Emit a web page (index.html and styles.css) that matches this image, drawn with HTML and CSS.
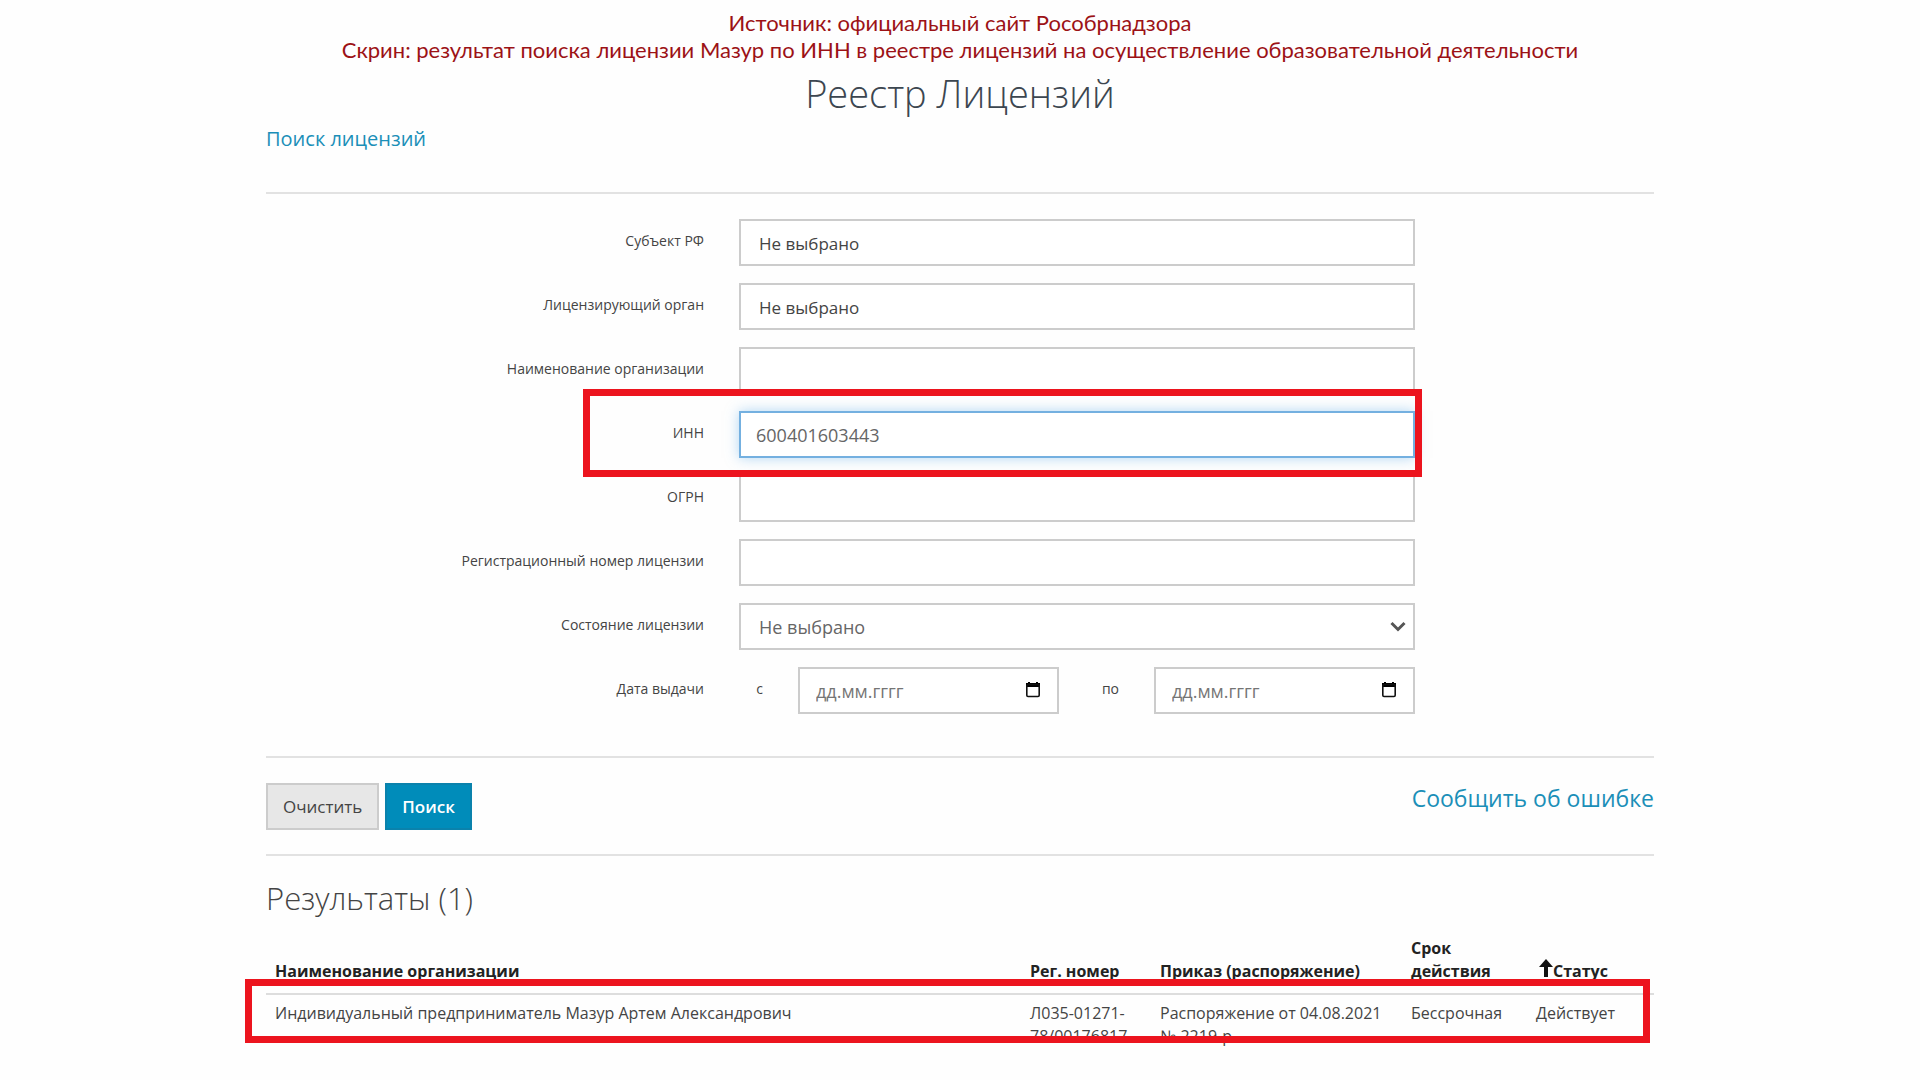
FILE: index.html
```html
<!DOCTYPE html>
<html lang="ru">
<head>
<meta charset="utf-8">
<meta name="viewport" content="width=device-width, initial-scale=1">
<title>Реестр Лицензий</title>
<link rel="stylesheet" href="styles.css">
</head>
<body>
<header class="caption">
  <p>Источник: официальный сайт Рособрнадзора</p>
  <p>Скрин: результат поиска лицензии Мазур по ИНН в реестре лицензий на осуществление образовательной деятельности</p>
</header>
<main class="page">
  <h1 class="title">Реестр Лицензий</h1>
  <nav class="nav"><a href="#search">Поиск лицензий</a></nav>
  <form id="search">
    <div class="fields">
      <div class="row">
        <label for="region">Субъект РФ</label>
        <input class="control picker" id="region" type="text" value="Не выбрано" readonly>
      </div>
      <div class="row">
        <label for="authority">Лицензирующий орган</label>
        <input class="control picker" id="authority" type="text" value="Не выбрано" readonly>
      </div>
      <div class="row">
        <label for="org">Наименование организации</label>
        <input class="control" id="org" type="text">
      </div>
      <div class="row marked">
        <label for="inn">ИНН</label>
        <input class="control active" id="inn" type="text" value="600401603443">
      </div>
      <div class="row">
        <label for="ogrn">ОГРН</label>
        <input class="control" id="ogrn" type="text">
      </div>
      <div class="row">
        <label for="regnum">Регистрационный номер лицензии</label>
        <input class="control" id="regnum" type="text">
      </div>
      <div class="row">
        <label for="state">Состояние лицензии</label>
        <div class="select">
          <select class="control" id="state"><option>Не выбрано</option></select>
          <svg class="chevron" viewBox="0 0 16 11" aria-hidden="true"><path d="M1.5 2 8 8.5 14.5 2" fill="none" stroke="#555" stroke-width="3"/></svg>
        </div>
      </div>
      <div class="row">
        <span class="label">Дата выдачи</span>
        <div class="dates">
          <label for="from">с</label>
          <div class="date">
            <input class="control" id="from" type="text" placeholder="дд.мм.гггг">
            <button class="calendar" type="button" aria-label="Выбрать дату"><svg viewBox="0 0 16 16"><path d="M3 0h2v1h6V0h2v1h2v4H1V1h2z"/><rect x="1.8" y="2.5" width="12.4" height="12" rx="1.2" fill="none" stroke="#111" stroke-width="1.6"/></svg></button>
          </div>
          <label for="to">по</label>
          <div class="date">
            <input class="control" id="to" type="text" placeholder="дд.мм.гггг">
            <button class="calendar" type="button" aria-label="Выбрать дату"><svg viewBox="0 0 16 16"><path d="M3 0h2v1h6V0h2v1h2v4H1V1h2z"/><rect x="1.8" y="2.5" width="12.4" height="12" rx="1.2" fill="none" stroke="#111" stroke-width="1.6"/></svg></button>
          </div>
        </div>
      </div>
    </div>
    <div class="actions">
      <button class="btn" type="reset">Очистить</button>
      <button class="btn primary" type="submit">Поиск</button>
      <a class="report" href="#report">Сообщить об ошибке</a>
    </div>
  </form>
  <section>
    <h2 class="results-title">Результаты (1)</h2>
    <table class="results">
      <colgroup><col class="c-name"><col class="c-reg"><col class="c-order"><col class="c-term"><col class="c-status"></colgroup>
      <thead>
        <tr>
          <th>Наименование организации</th>
          <th>Рег. номер</th>
          <th>Приказ (распоряжение)</th>
          <th>Срок действия</th>
          <th class="sorted"><svg class="arrow" viewBox="0 0 14 18" aria-hidden="true"><path d="M7 0 14 8H9v10H5V8H0z"/></svg>Статус</th>
        </tr>
      </thead>
      <tbody>
        <tr class="marked">
          <td>Индивидуальный предприниматель Мазур Артем Александрович</td>
          <td>Л035-01271-78/00176817</td>
          <td>Распоряжение от 04.08.2021 № 2219-р</td>
          <td>Бессрочная</td>
          <td>Действует</td>
        </tr>
      </tbody>
    </table>
  </section>
</main>
</body>
</html>
```
FILE: styles.css
```css
*, *::after { box-sizing: border-box; }
body {
  margin: 0;
  background: #fefefe;
  color: #444;
  font-family: "Open Sans", "Noto Sans", sans-serif;
  font-size: 16px;
  line-height: 23px;
}
a { color: #1b8fb8; text-decoration: none; }

.caption {
  padding: 9px 0 1px;
  color: #9c1216;
  font-family: Lato, "Open Sans", sans-serif;
  font-size: 22px;
  line-height: 27px;
  text-align: center;
}
.caption p { margin: 0; }

.page { max-width: 1388px; margin: 0 auto; }
.title {
  margin: 0;
  color: #3c4650;
  font-size: 38px;
  font-weight: 300;
  line-height: 58px;
  text-align: center;
}
.nav {
  height: 72px;
  padding-top: 3px;
  border-bottom: 2px solid #e2e2e2;
  font-size: 20px;
  line-height: 28px;
}

.fields {
  display: flex;
  flex-direction: column;
  gap: 17px;
  padding: 25px 239px 42px 0;
}
.row {
  position: relative;
  display: grid;
  grid-template-columns: 438px 1fr;
  column-gap: 35px;
  align-items: center;
  font-size: 14px;
}
.row > label, .label { text-align: right; padding-bottom: 5px; }
.control {
  display: block;
  width: 100%;
  height: 47px;
  margin: 0;
  padding: 1px 15px 0;
  border: 2px solid #ccc;
  border-radius: 0;
  outline: 0;
  background: #fff;
  color: #666;
  font: 18px "Open Sans", "Noto Sans", sans-serif;
}
.control::placeholder { color: #757575; opacity: 1; }
.picker { padding-left: 18px; color: #444; font-size: 17px; }
.active { border-color: #74b0e0; box-shadow: 0 0 12px rgba(102, 175, 233, .5); }
.select, .date { position: relative; }
.select .control { appearance: none; padding-left: 18px; }
.chevron { position: absolute; right: 9px; top: 18px; width: 16px; height: 11px; }
.dates {
  display: grid;
  grid-template-columns: 59px 1fr 95px 1fr;
  align-items: center;
}
.dates label { padding-bottom: 5px; text-align: center; padding-right: 18px; }
.dates .date + label { padding: 0 0 5px 8px; }
.date .control { padding-left: 16px; }
.calendar {
  position: absolute;
  right: 18px;
  top: 15px;
  width: 16px;
  height: 16px;
  padding: 0;
  border: 0;
  background: none;
}
.calendar svg { display: block; }

.row.marked { z-index: 1; }
.row.marked::after {
  content: "";
  position: absolute;
  inset: -22px -7px -19px 317px;
  border: 7px solid #ec141e;
  pointer-events: none;
}

.actions {
  display: flex;
  gap: 6px;
  padding: 25px 0 24px;
  border-top: 2px solid #e2e2e2;
  border-bottom: 2px solid #e2e2e2;
}
.btn {
  height: 47px;
  padding: 0 15px;
  border: 2px solid #ccc;
  background: #e7e7e7;
  color: #444;
  font: 17px "Open Sans", "Noto Sans", sans-serif;
}
.primary { border-color: #0a82ac; background: #008cba; color: #fff; font-weight: 600; }
.report { margin-left: auto; font-size: 23px; line-height: 30px; }

.results-title {
  margin: 22px 0 19px;
  font-size: 31px;
  font-weight: 300;
  line-height: 40px;
}
.results {
  width: 100%;
  border-collapse: separate;
  border-spacing: 0;
  table-layout: fixed;
}
.results th, .results td { padding: 0 9px; text-align: left; }
.results th { padding-bottom: 10px; color: #222; font-weight: 700; vertical-align: bottom; }
.results td { padding-top: 7px; border-top: 2px solid #ddd; vertical-align: top; }
.results th.sorted { padding-left: 12px; }
.c-reg { width: 130px; }
.c-order { width: 251px; }
.c-term { width: 125px; }
.c-status { width: 127px; }
.arrow { width: 14px; height: 18px; fill: #111; }
.results .marked { position: relative; }
.results .marked td:first-child::after {
  content: "";
  position: absolute;
  inset: -14px 4px auto -21px;
  height: 64px;
  border: 7px solid #ec141e;
  pointer-events: none;
}
```
